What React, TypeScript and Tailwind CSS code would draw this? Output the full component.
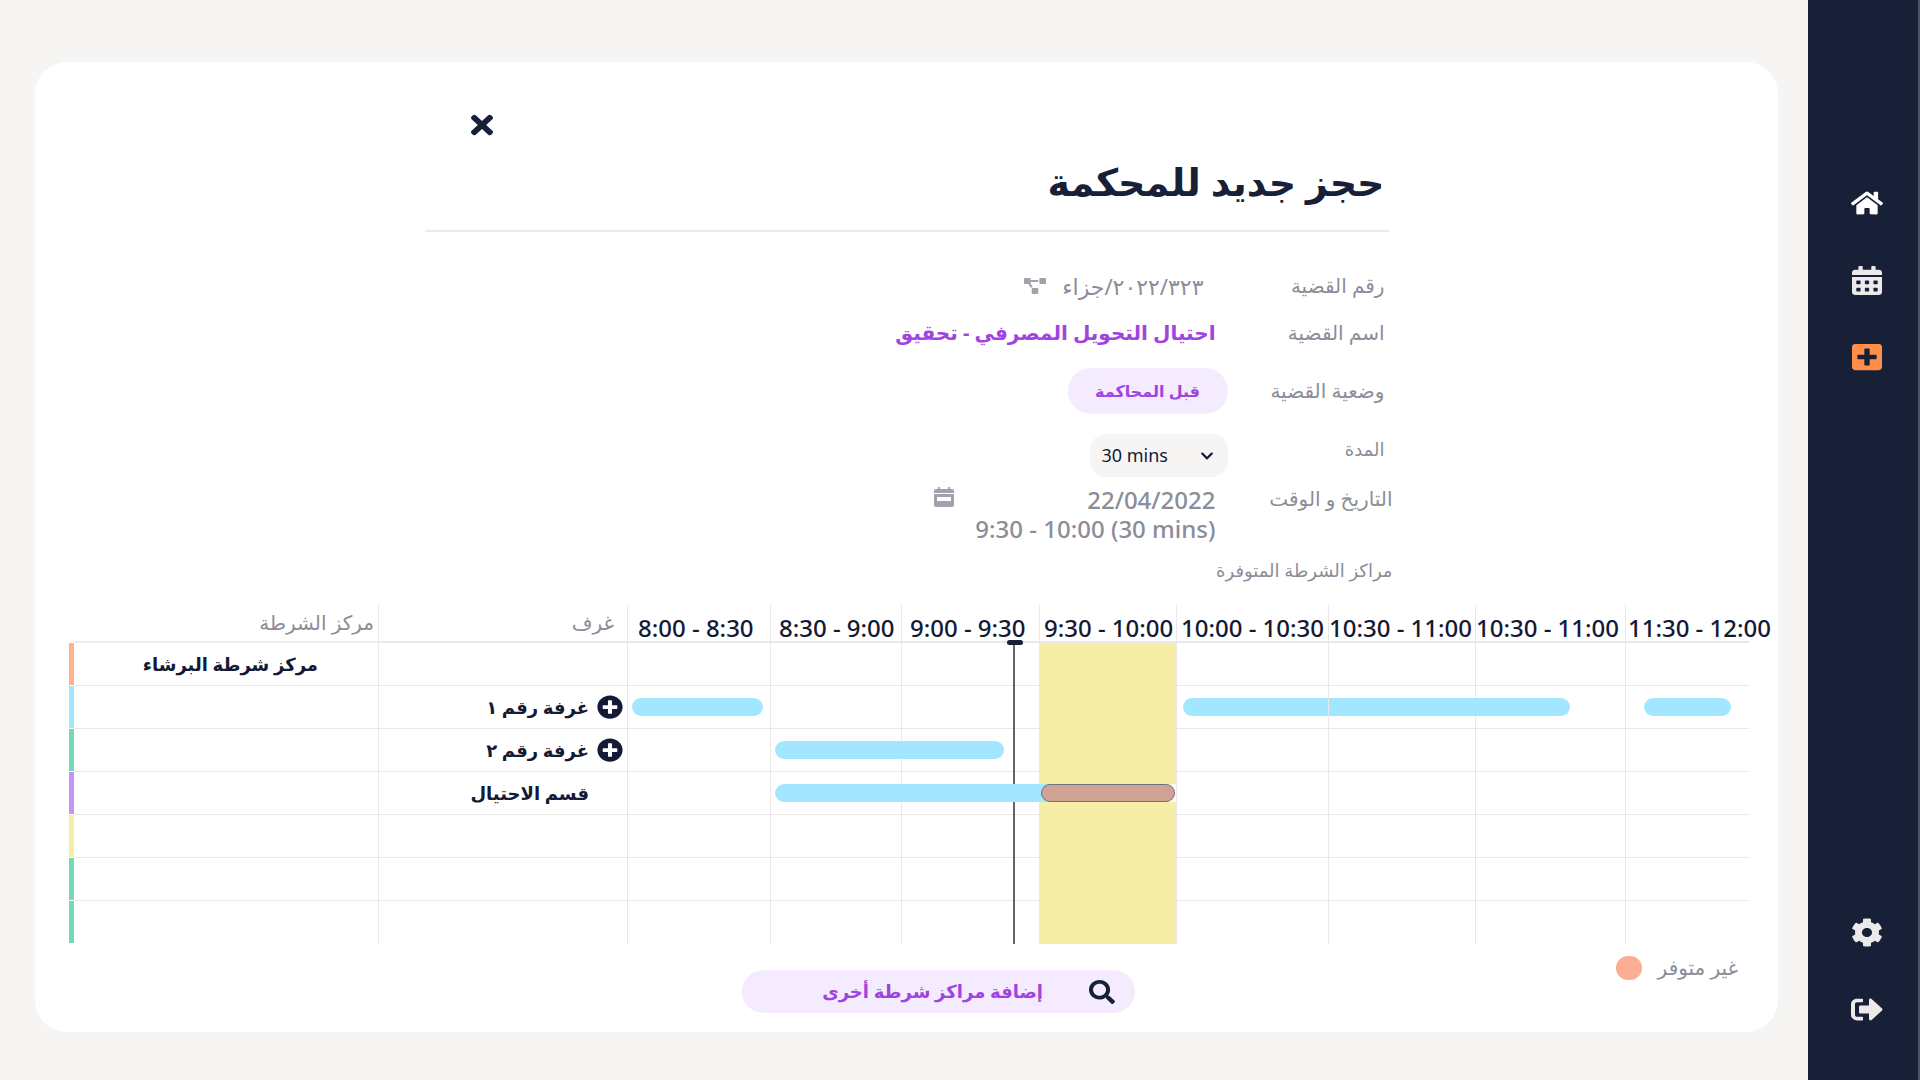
import type { ReactNode } from "react";
import {
  FaCalendarAlt,
  FaChevronDown,
  FaCog,
  FaHome,
  FaPlusCircle,
  FaPlusSquare,
  FaProjectDiagram,
  FaSearch,
  FaSignOutAlt,
  FaTimes,
} from "react-icons/fa";

type Bar = { left: number; width: number; className: string };

const columns = [
  { key: "centre", width: 304 },
  { key: "room", width: 249 },
  { key: "s1", width: 143, label: "8:00 - 8:30", pad: "pl-2.5" },
  { key: "s2", width: 131, label: "8:30 - 9:00", pad: "pl-2" },
  { key: "s3", width: 138, label: "9:00 - 9:30", pad: "pl-2" },
  { key: "s4", width: 137, label: "9:30 - 10:00", pad: "pl-1" },
  { key: "s5", width: 152, label: "10:00 - 10:30", pad: "pl-1" },
  { key: "s6", width: 147, label: "10:30 - 11:00", pad: "pl-0" },
  { key: "s7", width: 150, label: "10:30 - 11:00", pad: "pl-0" },
  { key: "s8", width: 124, label: "11:30 - 12:00", pad: "pl-0.5" },
];
const totalWidth = columns.reduce((sum, c) => sum + c.width, 0);
const slots = columns.slice(2);

const busy = "bg-[#a3e6ff]";

const rows: {
  strip: string;
  centre?: string;
  room?: string;
  expandable?: boolean;
  bars?: Record<string, Bar[]>;
}[] = [
  { strip: "bg-[#fdb48c]", centre: "مركز شرطة البرشاء" },
  {
    strip: "bg-[#a3e6ff]",
    room: "غرفة رقم ١",
    expandable: true,
    bars: {
      s1: [{ left: 3, width: 92, className: `${busy} rounded-full` }],
      s5: [{ left: 4, width: 96, className: `${busy} rounded-l-full` }],
      s6: [{ left: 0, width: 165, className: `${busy} rounded-r-full` }],
      s8: [{ left: 15, width: 70, className: `${busy} rounded-full` }],
    },
  },
  {
    strip: "bg-[#72dbb5]",
    room: "غرفة رقم ٢",
    expandable: true,
    bars: { s2: [{ left: 3, width: 176, className: `${busy} rounded-full` }] },
  },
  {
    strip: "bg-[#c893f5]",
    room: "قسم الاحتيال",
    bars: {
      s2: [{ left: 3, width: 204, className: `${busy} rounded-l-full` }],
      s4: [
        { left: 0, width: 50, className: busy },
        { left: 50, width: 50, className: "bg-[#fdfbee]" },
        { left: 1, width: 98, className: "rounded-full border border-[#6f7182] bg-[#cfa294]" },
      ],
    },
  },
  { strip: "bg-[#f6eea6]" },
  { strip: "bg-[#72dbb5]" },
  { strip: "bg-[#72dbb5]" },
];

function NavButton({ label, className, children }: { label: string; className: string; children: ReactNode }) {
  return (
    <button type="button" aria-label={label} className={`flex h-8 w-8 items-center justify-center ${className}`}>
      {children}
    </button>
  );
}

function CalendarIcon() {
  return (
    <svg viewBox="0 0 20 20" className="h-5 w-5" fill="#a0a2ad" aria-hidden="true">
      <path d="M4 0h2v2h8V0h2v2h2a2 2 0 0 1 2 2v2H0V4a2 2 0 0 1 2-2h2z" />
      <path fillRule="evenodd" d="M0 7h20v11a2 2 0 0 1-2 2H2a2 2 0 0 1-2-2zM3 10v4h14v-4z" />
    </svg>
  );
}

function Field({ label, height, children }: { label: string; height: string; children: ReactNode }) {
  return (
    <div className={`flex items-center ${height}`}>
      <dt className="w-[161px] shrink-0 pr-1 text-[20px] leading-6 text-[#8b8d98]">{label}</dt>
      <dd className="flex items-center">{children}</dd>
    </div>
  );
}

function Schedule() {
  return (
    <table className="w-full table-fixed border-separate border-spacing-0" dir="ltr">
      <colgroup>
        <col className="w-[5px]" />
        {columns.map((c) => (
          <col key={c.key} style={{ width: `${(c.width / totalWidth) * 100}%` }} />
        ))}
      </colgroup>
      <thead>
        <tr className="h-[38px] text-[20px] leading-6">
          <td />
          <th scope="col" className="border-b-2 border-[#edebeb] p-0 pr-1 text-right font-normal text-[#8b8d98]" dir="rtl">
            مركز الشرطة
          </th>
          <th scope="col" className="border-b-2 border-l border-[#e9e7e7] p-0 pr-3 text-right font-normal text-[#8b8d98]" dir="rtl">
            غرف
          </th>
          {slots.map((slot) => (
            <th
              key={slot.key}
              scope="col"
              className={`border-b-2 border-l border-[#e9e7e7] pt-2.5 pr-0 pb-0 text-left text-[24px] font-medium whitespace-nowrap text-[#141a35] ${slot.pad}`}
            >
              {slot.label}
            </th>
          ))}
        </tr>
      </thead>
      <tbody>
        {rows.map((row, r) => {
          const line = r < rows.length - 1 ? "border-b border-[#e9e7e7]" : "border-b border-transparent";
          return (
            <tr key={r} className="h-[43px] text-[18px] leading-6 font-bold text-[#141a35]">
              <td className={`border-b border-white p-0 ${row.strip}`} />
              <td className={`${line} p-0 pr-[60px] text-right`} dir="rtl">
                {row.centre}
              </td>
              <td className={`${line} border-l border-l-[#e9e7e7] p-0`}>
                <div className="flex items-center justify-end gap-2 pr-1">
                  <span dir="rtl">{row.room}</span>
                  {row.expandable ? (
                    <button type="button" aria-label="توسيع الغرفة">
                      <FaPlusCircle className="h-6 w-[26px]" preserveAspectRatio="none" />
                    </button>
                  ) : (
                    <span className="w-[26px]" />
                  )}
                </div>
              </td>
              {slots.map((slot) => (
                <td
                  key={slot.key}
                  className={`relative border-l border-l-[#e9e7e7] p-0 ${slot.key === "s4" ? "border-b border-b-[#f6eea6] bg-[#f6eea6]" : line}`}
                >
                  {row.bars?.[slot.key]?.map((bar, b) => (
                    <div
                      key={b}
                      className={`absolute top-1/2 z-10 h-[18px] -translate-y-1/2 ${bar.className}`}
                      style={{ left: `${bar.left}%`, width: `${bar.width}%` }}
                    />
                  ))}
                  {slot.key === "s3" && <div className="absolute top-0 -bottom-px left-[81%] w-[2px] bg-[#62656f]" />}
                  {slot.key === "s3" && r === 0 && (
                    <div className="absolute -top-[3px] left-[77%] h-[5px] w-4 rounded-full bg-[#182038]" />
                  )}
                </td>
              ))}
            </tr>
          );
        })}
      </tbody>
    </table>
  );
}

export default function App() {
  return (
    <div className="flex min-h-screen bg-[#f7f5f4] font-['Noto_Sans','DejaVu_Sans',sans-serif]">
      <main className="min-w-0 flex-1 pt-[62px] pr-[30px] pb-12 pl-[35px]">
        <section className="flex min-h-[970px] flex-col rounded-[32px] bg-white" dir="rtl">
          <div className="mx-auto w-full max-w-[964px]">
            <div className="flex justify-end pt-12 pl-[46px]">
              <button type="button" aria-label="إغلاق" className="text-[#182038]">
                <FaTimes className="h-[30px] w-[22px]" preserveAspectRatio="none" />
              </button>
            </div>
            <h1 className="flex h-[92px] items-center border-b-2 border-[#ebebed] pr-1 pb-2 text-[38px] font-bold text-[#182038]">
              حجز جديد للمحكمة
            </h1>
            <dl className="pt-[31px]">
              <Field label="رقم القضية" height="h-[46px]">
                <span className="pr-6 text-[22px] text-[#8b8d98]">٢٠٢٢/٣٢٣/جزاء</span>
                <FaProjectDiagram className="mr-4 h-4 w-[22px] text-[#a0a2ad]" preserveAspectRatio="none" />
              </Field>
              <Field label="اسم القضية" height="h-12">
                <a href="#case" className="pr-3 text-[20px] font-bold text-[#a044e0]">
                  احتيال التحويل المصرفي - تحقيق
                </a>
              </Field>
              <Field label="وضعية القضية" height="h-[68px]">
                <span className="flex h-[46px] w-[160px] items-center justify-center rounded-full bg-[#f4ebfe] text-[16px] font-bold text-[#a044e0]">
                  قبل المحاكمة
                </span>
              </Field>
              <div className="flex h-[60px] items-center">
                <dt className="w-[161px] shrink-0 pr-1 pb-3 text-[18px] leading-6 text-[#8b8d98]">
                  <label htmlFor="duration">المدة</label>
                </dt>
                <dd className="relative" dir="ltr">
                  <select
                    id="duration"
                    className="h-[43px] w-[138px] appearance-none rounded-2xl bg-[#f7f5f4] pl-3 text-[18px] text-[#141a35]"
                  >
                    <option>30 mins</option>
                    <option>60 mins</option>
                  </select>
                  <FaChevronDown className="pointer-events-none absolute top-[15px] right-[14px] h-[14px] w-[14px] text-[#141a35]" />
                </dd>
              </div>
            </dl>
          </div>
          <div className="mx-auto w-full max-w-[972px]">
            <dl className="flex text-[#8b8d98]">
              <dt className="w-[165px] shrink-0 pt-0.5 text-[20px] leading-6">التاريخ و الوقت</dt>
              <dd className="flex w-[294px] items-start justify-between pr-3">
                <p className="text-right text-[24px] leading-[29px] font-medium" dir="ltr">
                  22/04/2022
                  <br />
                  9:30 - 10:00 (30 mins)
                </p>
                <button type="button" aria-label="اختيار التاريخ" className="pt-0.5">
                  <CalendarIcon />
                </button>
              </dd>
            </dl>
            <h2 className="pt-[15px] text-[18px] leading-6 text-[#8b8d98]">مراكز الشرطة المتوفرة</h2>
          </div>
          <div className="pt-[23px] pr-[29px] pl-[34px]">
            <Schedule />
          </div>
          <div className="grid grid-cols-[1fr_auto_1fr] pb-4 pl-16">
            <div className="flex items-center gap-4 self-start pt-3 pr-10 text-[20px] leading-6 text-[#8b8d98]">
              غير متوفر
              <span className="h-6 w-[26px] rounded-full bg-[#fbae91]" />
            </div>
            <button
              type="button"
              className="mt-[26px] flex h-[43px] w-[393px] items-center gap-[46px] rounded-full bg-[#f4ebfe] pr-5 text-[18px] font-bold text-[#a044e0]"
            >
              <FaSearch className="h-6 w-[26px] text-[#182038]" preserveAspectRatio="none" />
              إضافة مراكز شرطة أخرى
            </button>
          </div>
        </section>
      </main>
      <nav
        className="flex w-28 shrink-0 flex-col items-center border-r-2 border-[#4d5265] bg-[#182038] pt-[187px] pb-[55px]"
        aria-label="القائمة"
      >
        <div className="flex flex-1 flex-col gap-[45px] pl-2">
          <NavButton label="الرئيسية" className="text-white">
            <FaHome className="h-[26px] w-8" preserveAspectRatio="none" />
          </NavButton>
          <NavButton label="التقويم" className="text-[#ebe9ea]">
            <FaCalendarAlt className="h-[29px] w-[30px]" preserveAspectRatio="none" />
          </NavButton>
          <NavButton label="حجز جديد" className="text-[#fd8f4b]">
            <FaPlusSquare className="h-[30px] w-[30px]" preserveAspectRatio="none" />
          </NavButton>
        </div>
        <div className="flex flex-col gap-[45px] pl-2">
          <NavButton label="الإعدادات" className="text-[#ebe9ea]">
            <FaCog className="h-[29px] w-8" preserveAspectRatio="none" />
          </NavButton>
          <NavButton label="تسجيل الخروج" className="text-[#ebe9ea]">
            <FaSignOutAlt className="h-[29px] w-8" preserveAspectRatio="none" />
          </NavButton>
        </div>
      </nav>
    </div>
  );
}
